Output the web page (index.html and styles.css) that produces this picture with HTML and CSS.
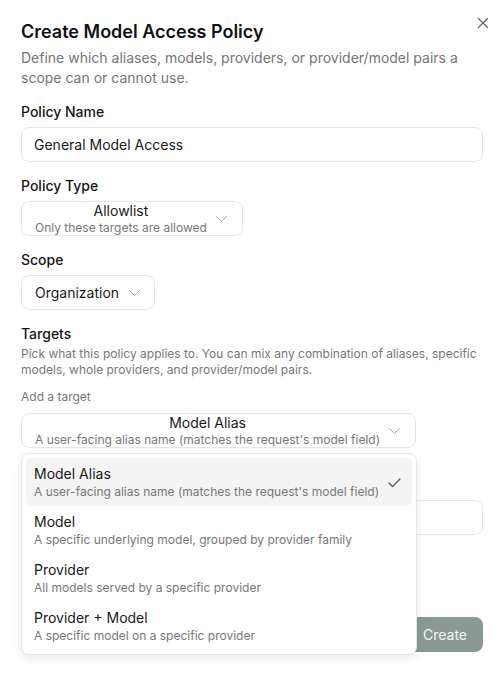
FILE: index.html
```html
<!DOCTYPE html>
<html lang="en">
<head>
    <meta charset="UTF-8">
    <meta name="viewport" content="width=device-width, initial-scale=1.0">
    <title>Create Model Access Policy</title>
    <link rel="stylesheet" href="styles.css">
</head>
<body>
    <div class="dialog">
        <button type="button" class="close-button" aria-label="Close">
            <svg width="12" height="12" viewBox="0 0 12 12" fill="none" stroke="#666" stroke-width="1.3" stroke-linecap="round">
                <line x1="1.5" y1="1.5" x2="10.5" y2="10.5"/>
                <line x1="10.5" y1="1.5" x2="1.5" y2="10.5"/>
            </svg>
        </button>

        <h2 class="title">Create Model Access Policy</h2>
        <p class="subtitle">Define which aliases, models, providers, or provider/model pairs a scope can or cannot use.</p>

        <form class="form">
            <div class="field">
                <label class="label" for="PolicyName">Policy Name</label>
                <input type="text" id="PolicyName" class="input" value="General Model Access">
            </div>

            <div class="field">
                <span class="label">Policy Type</span>
                <button type="button" class="select">
                    <span class="select-value">
                        <span class="select-title">Allowlist</span>
                        <span class="select-desc">Only these targets are allowed</span>
                    </span>
                    <svg class="chevron" width="11" height="6" viewBox="0 0 11 6" fill="none" stroke="#aaa" stroke-width="1" stroke-linecap="round" stroke-linejoin="round">
                        <polyline points="0.5 0.5 5.5 5.5 10.5 0.5"/>
                    </svg>
                </button>
            </div>

            <div class="field">
                <span class="label">Scope</span>
                <button type="button" class="select select-single">
                    <span class="select-text">Organization</span>
                    <svg class="chevron" width="11" height="6" viewBox="0 0 11 6" fill="none" stroke="#aaa" stroke-width="1" stroke-linecap="round" stroke-linejoin="round">
                        <polyline points="0.5 0.5 5.5 5.5 10.5 0.5"/>
                    </svg>
                </button>
            </div>

            <div class="field targets">
                <span class="label">Targets</span>
                <p class="hint">Pick what this policy applies to. You can mix any combination of aliases, specific models, whole providers, and provider/model pairs.</p>
                <span class="sublabel">Add a target</span>

                <div class="picker">
                    <button type="button" class="select">
                        <span class="select-value">
                            <span class="select-title">Model Alias</span>
                            <span class="select-desc">A user-facing alias name (matches the request's model field)</span>
                        </span>
                        <svg class="chevron" width="11" height="6" viewBox="0 0 11 6" fill="none" stroke="#aaa" stroke-width="1" stroke-linecap="round" stroke-linejoin="round">
                            <polyline points="0.5 0.5 5.5 5.5 10.5 0.5"/>
                        </svg>
                    </button>

                    <div class="menu">
                        <div class="option active">
                            <div>
                                <div class="option-title">Model Alias</div>
                                <div class="option-desc">A user-facing alias name (matches the request's model field)</div>
                            </div>
                            <svg width="13" height="10" viewBox="0 0 13 10" fill="none" stroke="#555" stroke-width="1.3" stroke-linecap="round" stroke-linejoin="round">
                                <polyline points="1 5 4.5 8.5 12 1"/>
                            </svg>
                        </div>
                        <div class="option">
                            <div>
                                <div class="option-title">Model</div>
                                <div class="option-desc">A specific underlying model, grouped by provider family</div>
                            </div>
                        </div>
                        <div class="option">
                            <div>
                                <div class="option-title">Provider</div>
                                <div class="option-desc">All models served by a specific provider</div>
                            </div>
                        </div>
                        <div class="option">
                            <div>
                                <div class="option-title">Provider + Model</div>
                                <div class="option-desc">A specific model on a specific provider</div>
                            </div>
                        </div>
                    </div>
                </div>
            </div>

            <div class="field alias-field">
                <label class="label" for="Alias">Alias</label>
                <input type="text" id="Alias" class="input">
            </div>

            <div class="footer">
                <button type="button" class="cancel-button">Cancel</button>
                <button type="submit" class="create-button">Create</button>
            </div>
        </form>
    </div>
</body>
</html>
```

FILE: styles.css
```css
body {
    margin: 0;
    font-family: 'Inter', 'Noto Sans', sans-serif;
    color: #161616;
    background: #ffffff;
}

.dialog {
    position: relative;
    box-sizing: border-box;
    min-height: 675px;
    padding: 20px 21px;
    background: #ffffff;
}

.close-button {
    position: absolute;
    top: 17px;
    right: 15px;
    padding: 0;
    border: none;
    background: transparent;
    cursor: pointer;
    line-height: 0;
}

.title {
    margin: 0;
    font-size: 18px;
    line-height: 24px;
    font-weight: 600;
    color: #111;
}

.subtitle {
    margin: 4px 0 0;
    font-size: 14px;
    line-height: 20px;
    color: #767676;
}

.form {
    display: flex;
    flex-direction: column;
    gap: 14px;
    margin-top: 14px;
}

.field {
    display: flex;
    flex-direction: column;
    align-items: flex-start;
    gap: 5px;
}

.label {
    font-size: 14px;
    line-height: 20px;
    font-weight: 500;
    color: #161616;
}

.input {
    box-sizing: border-box;
    width: 100%;
    height: 35px;
    padding: 0 12px;
    border: 1px solid #e7e7e7;
    border-radius: 8px;
    font-family: inherit;
    font-size: 14px;
    color: #1a1a1a;
    background: #fff;
}

.input:focus {
    outline: none;
}

.select {
    display: inline-flex;
    align-items: center;
    gap: 9px;
    box-sizing: border-box;
    height: 35px;
    padding: 0 15px 0 13px;
    border: 1px solid #e7e7e7;
    border-radius: 8px;
    background: #fff;
    font-family: inherit;
    color: #1a1a1a;
    cursor: pointer;
    overflow: hidden;
}

.select-single {
    gap: 10px;
    padding-right: 14px;
}

.select-value {
    display: flex;
    flex-direction: column;
    text-align: center;
    padding-top: 1px;
}

.select-title {
    font-size: 14px;
    line-height: 17px;
}

.select-desc {
    font-size: 12px;
    line-height: 17px;
    color: #777;
    white-space: nowrap;
}

.select-text {
    font-size: 14px;
}

.chevron {
    flex-shrink: 0;
}

.targets {
    gap: 0;
}

.hint {
    margin: 2px 0 0;
    font-size: 12px;
    line-height: 16px;
    color: #777;
}

.sublabel {
    margin-top: 10px;
    font-size: 12px;
    line-height: 18px;
    color: #777;
}

.picker {
    position: relative;
    margin-top: 6px;
}

.menu {
    position: absolute;
    top: calc(100% + 5px);
    left: 0;
    z-index: 10;
    width: 396px;
    box-sizing: border-box;
    padding: 4px;
    border: 1px solid #e7e7e7;
    border-radius: 8px;
    background: #fff;
    box-shadow: 0 4px 10px rgba(0, 0, 0, 0.08);
}

.option {
    display: flex;
    align-items: center;
    justify-content: space-between;
    padding: 7px 11px 6px 8px;
    border-radius: 6px;
}

.option.active {
    background: #f4f4f4;
}

.option-title {
    font-size: 14px;
    line-height: 18px;
    color: #1a1a1a;
}

.option-desc {
    font-size: 12px;
    line-height: 17px;
    color: #777;
}

.alias-field {
    margin-top: 13px;
}

.footer {
    display: flex;
    justify-content: flex-end;
    gap: 8px;
    margin-top: 68px;
}

.cancel-button,
.create-button {
    height: 35px;
    padding: 0 16px;
    border-radius: 8px;
    font-family: inherit;
    font-size: 14px;
    cursor: pointer;
}

.cancel-button {
    border: 1px solid #e7e7e7;
    background: #fff;
    color: #1a1a1a;
}

.create-button {
    border: none;
    background: #8a9a93;
    color: #f4f6f5;
}
```
